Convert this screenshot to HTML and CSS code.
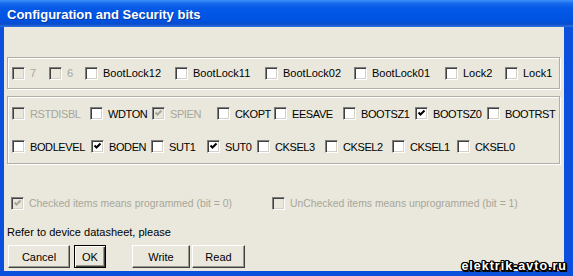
FILE: index.html
```html
<!DOCTYPE html>
<html lang="en">
<head>
  <meta charset="UTF-8">
  <meta name="viewport" content="width=device-width, initial-scale=1.0">
  <title>Configuration and Security bits</title>
  <link rel="stylesheet" href="styles.css">
</head>
<body>

<div class="window">
  <div class="titlebar">
    <span class="title">Configuration and Security bits</span>
  </div>

  <div class="client">
    <!-- Lock bits -->
    <div class="group">
      <div class="row lock-row">
        <label class="check off"><span class="cb"></span>7</label>
        <label class="check off"><span class="cb"></span>6</label>
        <label class="check"><span class="cb"></span>BootLock12</label>
        <label class="check"><span class="cb"></span>BootLock11</label>
        <label class="check"><span class="cb"></span>BootLock02</label>
        <label class="check"><span class="cb"></span>BootLock01</label>
        <label class="check"><span class="cb"></span>Lock2</label>
        <label class="check"><span class="cb"></span>Lock1</label>
      </div>
    </div>

    <!-- Fuse bits -->
    <div class="group fuses">
      <div class="row fuse-row-a">
        <label class="check off"><span class="cb"></span>RSTDISBL</label>
        <label class="check"><span class="cb"></span>WDTON</label>
        <label class="check off"><span class="cb"><svg class="tick" viewBox="0 0 11 11"><polyline points="2.5,4.5 4.5,6.5 8.5,2.5"/></svg></span>SPIEN</label>
        <label class="check"><span class="cb"></span>CKOPT</label>
        <label class="check"><span class="cb"></span>EESAVE</label>
        <label class="check"><span class="cb"></span>BOOTSZ1</label>
        <label class="check"><span class="cb"><svg class="tick" viewBox="0 0 11 11"><polyline points="2.5,4.5 4.5,6.5 8.5,2.5"/></svg></span>BOOTSZ0</label>
        <label class="check"><span class="cb"></span>BOOTRST</label>
      </div>
      <div class="row fuse-row-b">
        <label class="check"><span class="cb"></span>BODLEVEL</label>
        <label class="check"><span class="cb"><svg class="tick" viewBox="0 0 11 11"><polyline points="2.5,4.5 4.5,6.5 8.5,2.5"/></svg></span>BODEN</label>
        <label class="check"><span class="cb"></span>SUT1</label>
        <label class="check"><span class="cb"><svg class="tick" viewBox="0 0 11 11"><polyline points="2.5,4.5 4.5,6.5 8.5,2.5"/></svg></span>SUT0</label>
        <label class="check"><span class="cb"></span>CKSEL3</label>
        <label class="check"><span class="cb"></span>CKSEL2</label>
        <label class="check"><span class="cb"></span>CKSEL1</label>
        <label class="check"><span class="cb"></span>CKSEL0</label>
      </div>
    </div>

    <!-- Legend -->
    <div class="row legend-row">
      <label class="check off"><span class="cb"><svg class="tick" viewBox="0 0 11 11"><polyline points="2.5,4.5 4.5,6.5 8.5,2.5"/></svg></span>Checked items means programmed (bit = 0)</label>
      <label class="check off"><span class="cb"></span>UnChecked items means unprogrammed (bit = 1)</label>
    </div>

    <div class="note">Refer to device datasheet, please</div>

    <div class="buttons">
      <button class="btn btn-cancel">Cancel</button>
      <button class="btn btn-ok default">OK</button>
      <button class="btn btn-write">Write</button>
      <button class="btn btn-read">Read</button>
    </div>
  </div>

  <div class="watermark">elektrik-avto.ru</div>
</div>

</body>
</html>
```

FILE: styles.css
```css
body {
  margin: 0;
  padding: 0;
  background: #ffffff;
  font-family: "Liberation Sans", Arial, sans-serif;
  font-size: 11px;
  color: #000000;
}

/* Window frame */
.window {
  position: relative;
  width: 573px;
  height: 276px;
  display: flex;
  flex-direction: column;
  overflow: hidden;
}

.titlebar {
  height: 26px;
  display: flex;
  align-items: center;
  padding-left: 7px;
  padding-top: 1px;
  background: linear-gradient(to bottom, #3f93f7 0, #1a6df0 3px, #0459e6 8px, #0055e5 16px, #0050dc 22px, #0a4cc8 24px, #2f72e0 27px);
}

.title {
  color: #ffffff;
  font-weight: bold;
  font-size: 13px;
  text-shadow: 1px 1px 0 #0b3a9e;
}

.client {
  flex: 1;
  display: flex;
  flex-direction: column;
  background: #eae8dc;
  border-style: solid;
  border-color: #0b50dc;
  border-width: 0 9px 5px 4px;
  padding: 30px 4px 0 2px;
}

/* Group boxes */
.group {
  margin-left: 1px;
  border: 1px solid #b1afa3;
  box-shadow: inset 1px 1px 0 #ffffff, 1px 1px 0 #ffffff;
  padding: 0 4px;
}

.fuses {
  margin-top: 7px;
}

.row {
  display: grid;
  align-items: center;
}

.lock-row {
  height: 30px;
  grid-template-columns: 37px 36px 90px 90px 89px 91px 60px auto;
}

.fuse-row-a,
.fuse-row-b {
  height: 33px;
  letter-spacing: -0.4px;
}

.fuse-row-a {
  grid-template-columns: 78px 62px 65px 57px 69px 72px 72px auto;
}

.fuse-row-b {
  grid-template-columns: 79px 60px 56px 50px 68px 67px 65px auto;
}

.legend-row {
  height: 16px;
  margin-top: 31px;
  padding-left: 5px;
  font-size: 10.4px;
  grid-template-columns: 261px auto;
}

/* Checkboxes */
.check {
  display: flex;
  align-items: center;
  white-space: nowrap;
}

.cb {
  width: 13px;
  height: 13px;
  box-sizing: border-box;
  margin-right: 5px;
  flex: none;
  border: 1px solid;
  border-color: #808080 #ffffff #ffffff #808080;
  background: #ffffff;
  box-shadow: inset 1px 1px 0 #404040, inset -1px -1px 0 #d4d0c8;
}

.tick {
  display: block;
  width: 11px;
  height: 11px;
}

.tick polyline {
  fill: none;
  stroke: #000000;
  stroke-width: 2;
}

.check.off {
  color: #a7a69a;
}

.check.off .cb {
  background: #eae8dc;
}

.check.off .tick polyline {
  stroke: #a7a69a;
}

.note {
  margin-top: 14px;
  margin-left: 1px;
  line-height: 14px;
}

/* Buttons */
.buttons {
  display: flex;
  margin-top: 6px;
  margin-left: 2px;
}

.btn {
  height: 23px;
  padding: 0;
  font-family: "Liberation Sans", Arial, sans-serif;
  font-size: 11px;
  color: #000000;
  background: #eae8dc;
  border: 1px solid;
  border-color: #ffffff #404040 #404040 #ffffff;
  box-shadow: inset -1px -1px 0 #9a988c;
}

.btn.default {
  border: 1px solid #000000;
  box-shadow: inset 1px 1px 0 #ffffff, inset -1px -1px 0 #404040, inset -2px -2px 0 #9a988c;
}

.btn-cancel {
  width: 62px;
}

.btn-ok {
  width: 32px;
  margin-left: 4px;
}

.btn-write {
  width: 58px;
  margin-left: 26px;
}

.btn-read {
  width: 53px;
  margin-left: 2px;
}

/* Site watermark over the corner */
.watermark {
  position: absolute;
  right: 6px;
  bottom: 3px;
  font-family: "Liberation Sans", Arial, sans-serif;
  font-weight: bold;
  font-size: 12.5px;
  letter-spacing: 1px;
  color: #ffffff;
  text-shadow: 1px 0 0 #000, -1px 0 0 #000, 0 1px 0 #000, 0 -1px 0 #000,
    1px 1px 0 #000, -1px -1px 0 #000, 1px -1px 0 #000, -1px 1px 0 #000,
    2px 0 0 #000, 0 2px 0 #000, 2px 2px 0 #000;
}
```
